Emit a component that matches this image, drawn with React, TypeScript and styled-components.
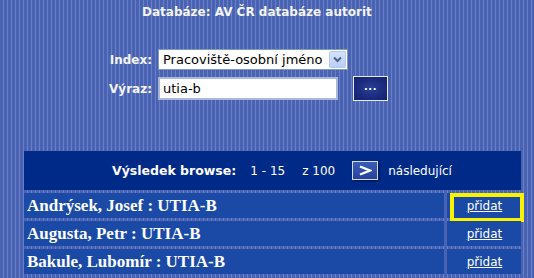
import React from 'react';
import styled, { createGlobalStyle } from 'styled-components';

const GlobalStyle = createGlobalStyle`
    html, body {
        margin: 0;
        padding: 0;
    }

    body {
        width: 534px;
        height: 278px;
        overflow: hidden;
        background-color: #4a62b2;
        background-image: repeating-linear-gradient(
            to right,
            #4a62b2 0px,
            #4a62b2 3px,
            #6780c6 3px,
            #6780c6 4px
        );
        font-family: 'DejaVu Sans', Verdana, sans-serif;
        color: #ffffff;
    }
`;

const Page = styled.div`
    display: flex;
    flex-direction: column;
    padding: 5px 13px 0 24px;
`;

const Title = styled.h1`
    margin: 0 0 0 118px;
    font-size: 12px;
    font-weight: bold;
    line-height: 15px;
    color: #f4f4f4;
`;

const SearchForm = styled.form`
    display: flex;
    flex-direction: column;
    gap: 6px;
    margin: 29px 0 0 0;
`;

const FieldRow = styled.div`
    display: flex;
    align-items: center;
`;

const FieldLabel = styled.label`
    width: 128px;
    padding-right: 6px;
    text-align: right;
    font-size: 12px;
    font-weight: bold;
    color: #f4f4f4;
`;

const SelectBox = styled.div`
    display: flex;
    align-items: stretch;
    width: 190px;
    height: 21px;
    box-sizing: border-box;
    border: 1px solid #7f9db9;
    background: #ffffff;
`;

const NativeSelect = styled.select`
    flex: 1;
    appearance: none;
    border: none;
    outline: none;
    background: transparent;
    padding: 0 0 0 4px;
    font-family: 'DejaVu Sans', Tahoma, sans-serif;
    font-size: 13px;
    color: #000000;
`;

const SelectArrow = styled.span`
    display: flex;
    align-items: center;
    justify-content: center;
    width: 15px;
    margin: 1px;
    border: 1px solid #b4c8f6;
    border-radius: 2px;
    background: linear-gradient(#d6e2fc, #b8cdf8);
`;

const TextInput = styled.input`
    width: 180px;
    height: 23px;
    box-sizing: border-box;
    border: 2px solid #a9b8d4;
    padding: 0 3px;
    font-family: 'DejaVu Sans', Tahoma, sans-serif;
    font-size: 13px;
    color: #000000;
    outline: none;
`;

const DotsButton = styled.button`
    width: 35px;
    height: 25px;
    margin-left: 15px;
    box-sizing: border-box;
    border: 1px solid #e6ebf6;
    background: radial-gradient(ellipse at center, #2a4098 0%, #1a2a7c 60%, #14216a 100%);
    color: #ffffff;
    font-family: 'DejaVu Sans', sans-serif;
    font-size: 10px;
    font-weight: bold;
    letter-spacing: 0.5px;
    line-height: 1;
    padding: 0 0 4px 0;
`;

const ResultTable = styled.div`
    display: grid;
    grid-template-columns: 1fr 74px;
    gap: 3px;
    width: 497px;
    margin-top: 50px;
`;

const BrowseBar = styled.div`
    grid-column: 1 / -1;
    display: flex;
    align-items: center;
    height: 39px;
    padding-left: 88px;
    background: #002a88;
    font-family: 'DejaVu Sans', Tahoma, sans-serif;
    font-size: 12px;
`;

const BarStrong = styled.span`
    font-weight: bold;
    font-size: 12.5px;
    margin-right: 14px;
`;

const BarText = styled.span<{ $gap: number }>`
    margin-right: ${(p) => p.$gap}px;
`;

const NextButton = styled.button`
    display: flex;
    align-items: center;
    justify-content: center;
    width: 26px;
    height: 19px;
    margin-right: 10px;
    padding: 0;
    box-sizing: border-box;
    border: 1px solid #d4dbee;
    background: linear-gradient(#3a5cb4, #26449e);
    box-shadow: 1px 1px 2px rgba(0, 0, 30, 0.6);
`;

const NameCell = styled.div`
    display: flex;
    align-items: center;
    height: 25px;
    padding-left: 3px;
    background: #1b4aa6;
    font-family: 'Liberation Serif', 'Times New Roman', serif;
    font-size: 17px;
    font-weight: bold;
    white-space: nowrap;
`;

const ActionCell = styled.div`
    position: relative;
    display: flex;
    align-items: center;
    justify-content: center;
    height: 25px;
    padding-left: 1px;
    background: #1b4aa6;
`;

const AddLink = styled.a`
    font-family: 'DejaVu Sans', Tahoma, sans-serif;
    font-size: 12px;
    color: #ffffff;
    text-decoration: underline;
    cursor: pointer;
`;

const Highlight = styled.span`
    position: absolute;
    left: 3px;
    top: 0;
    width: 74px;
    height: 29px;
    box-sizing: border-box;
    border: 4px solid #f8f400;
    pointer-events: none;
`;

const people = [
    { name: 'Andrýsek, Josef', highlighted: true },
    { name: 'Augusta, Petr', highlighted: false },
    { name: 'Bakule, Lubomír', highlighted: false },
];

export default function App() {
    return (
        <>
            <GlobalStyle />
            <Page>
                <Title>Databáze: AV ČR databáze autorit</Title>
                <SearchForm onSubmit={(e) => e.preventDefault()}>
                    <FieldRow>
                        <FieldLabel>Index:</FieldLabel>
                        <SelectBox>
                            <NativeSelect defaultValue="pracoviste">
                                <option value="pracoviste">Pracoviště-osobní jméno</option>
                            </NativeSelect>
                            <SelectArrow>
                                <svg width="9" height="7" viewBox="0 0 9 7">
                                    <path d="M1 1.5 L4.5 5 L8 1.5" fill="none" stroke="#4d6185" strokeWidth="2" />
                                </svg>
                            </SelectArrow>
                        </SelectBox>
                    </FieldRow>
                    <FieldRow>
                        <FieldLabel>Výraz:</FieldLabel>
                        <TextInput defaultValue="utia-b" />
                        <DotsButton type="button">...</DotsButton>
                    </FieldRow>
                </SearchForm>
                <ResultTable>
                    <BrowseBar>
                        <BarStrong>Výsledek browse:</BarStrong>
                        <BarText $gap={17}>1 - 15</BarText>
                        <BarText $gap={17}>z 100</BarText>
                        <NextButton type="button">
                            <svg width="14" height="11" viewBox="0 0 14 11">
                                <path d="M2 1.5 L12 5.5 L2 9.5" fill="none" stroke="#ffffff" strokeWidth="2.4" />
                            </svg>
                        </NextButton>
                        <span>následující</span>
                    </BrowseBar>
                    {people.map((p) => (
                        <React.Fragment key={p.name}>
                            <NameCell>{p.name} : UTIA-B</NameCell>
                            <ActionCell>
                                <AddLink>přidat</AddLink>
                                {p.highlighted && <Highlight />}
                            </ActionCell>
                        </React.Fragment>
                    ))}
                </ResultTable>
            </Page>
        </>
    );
}
